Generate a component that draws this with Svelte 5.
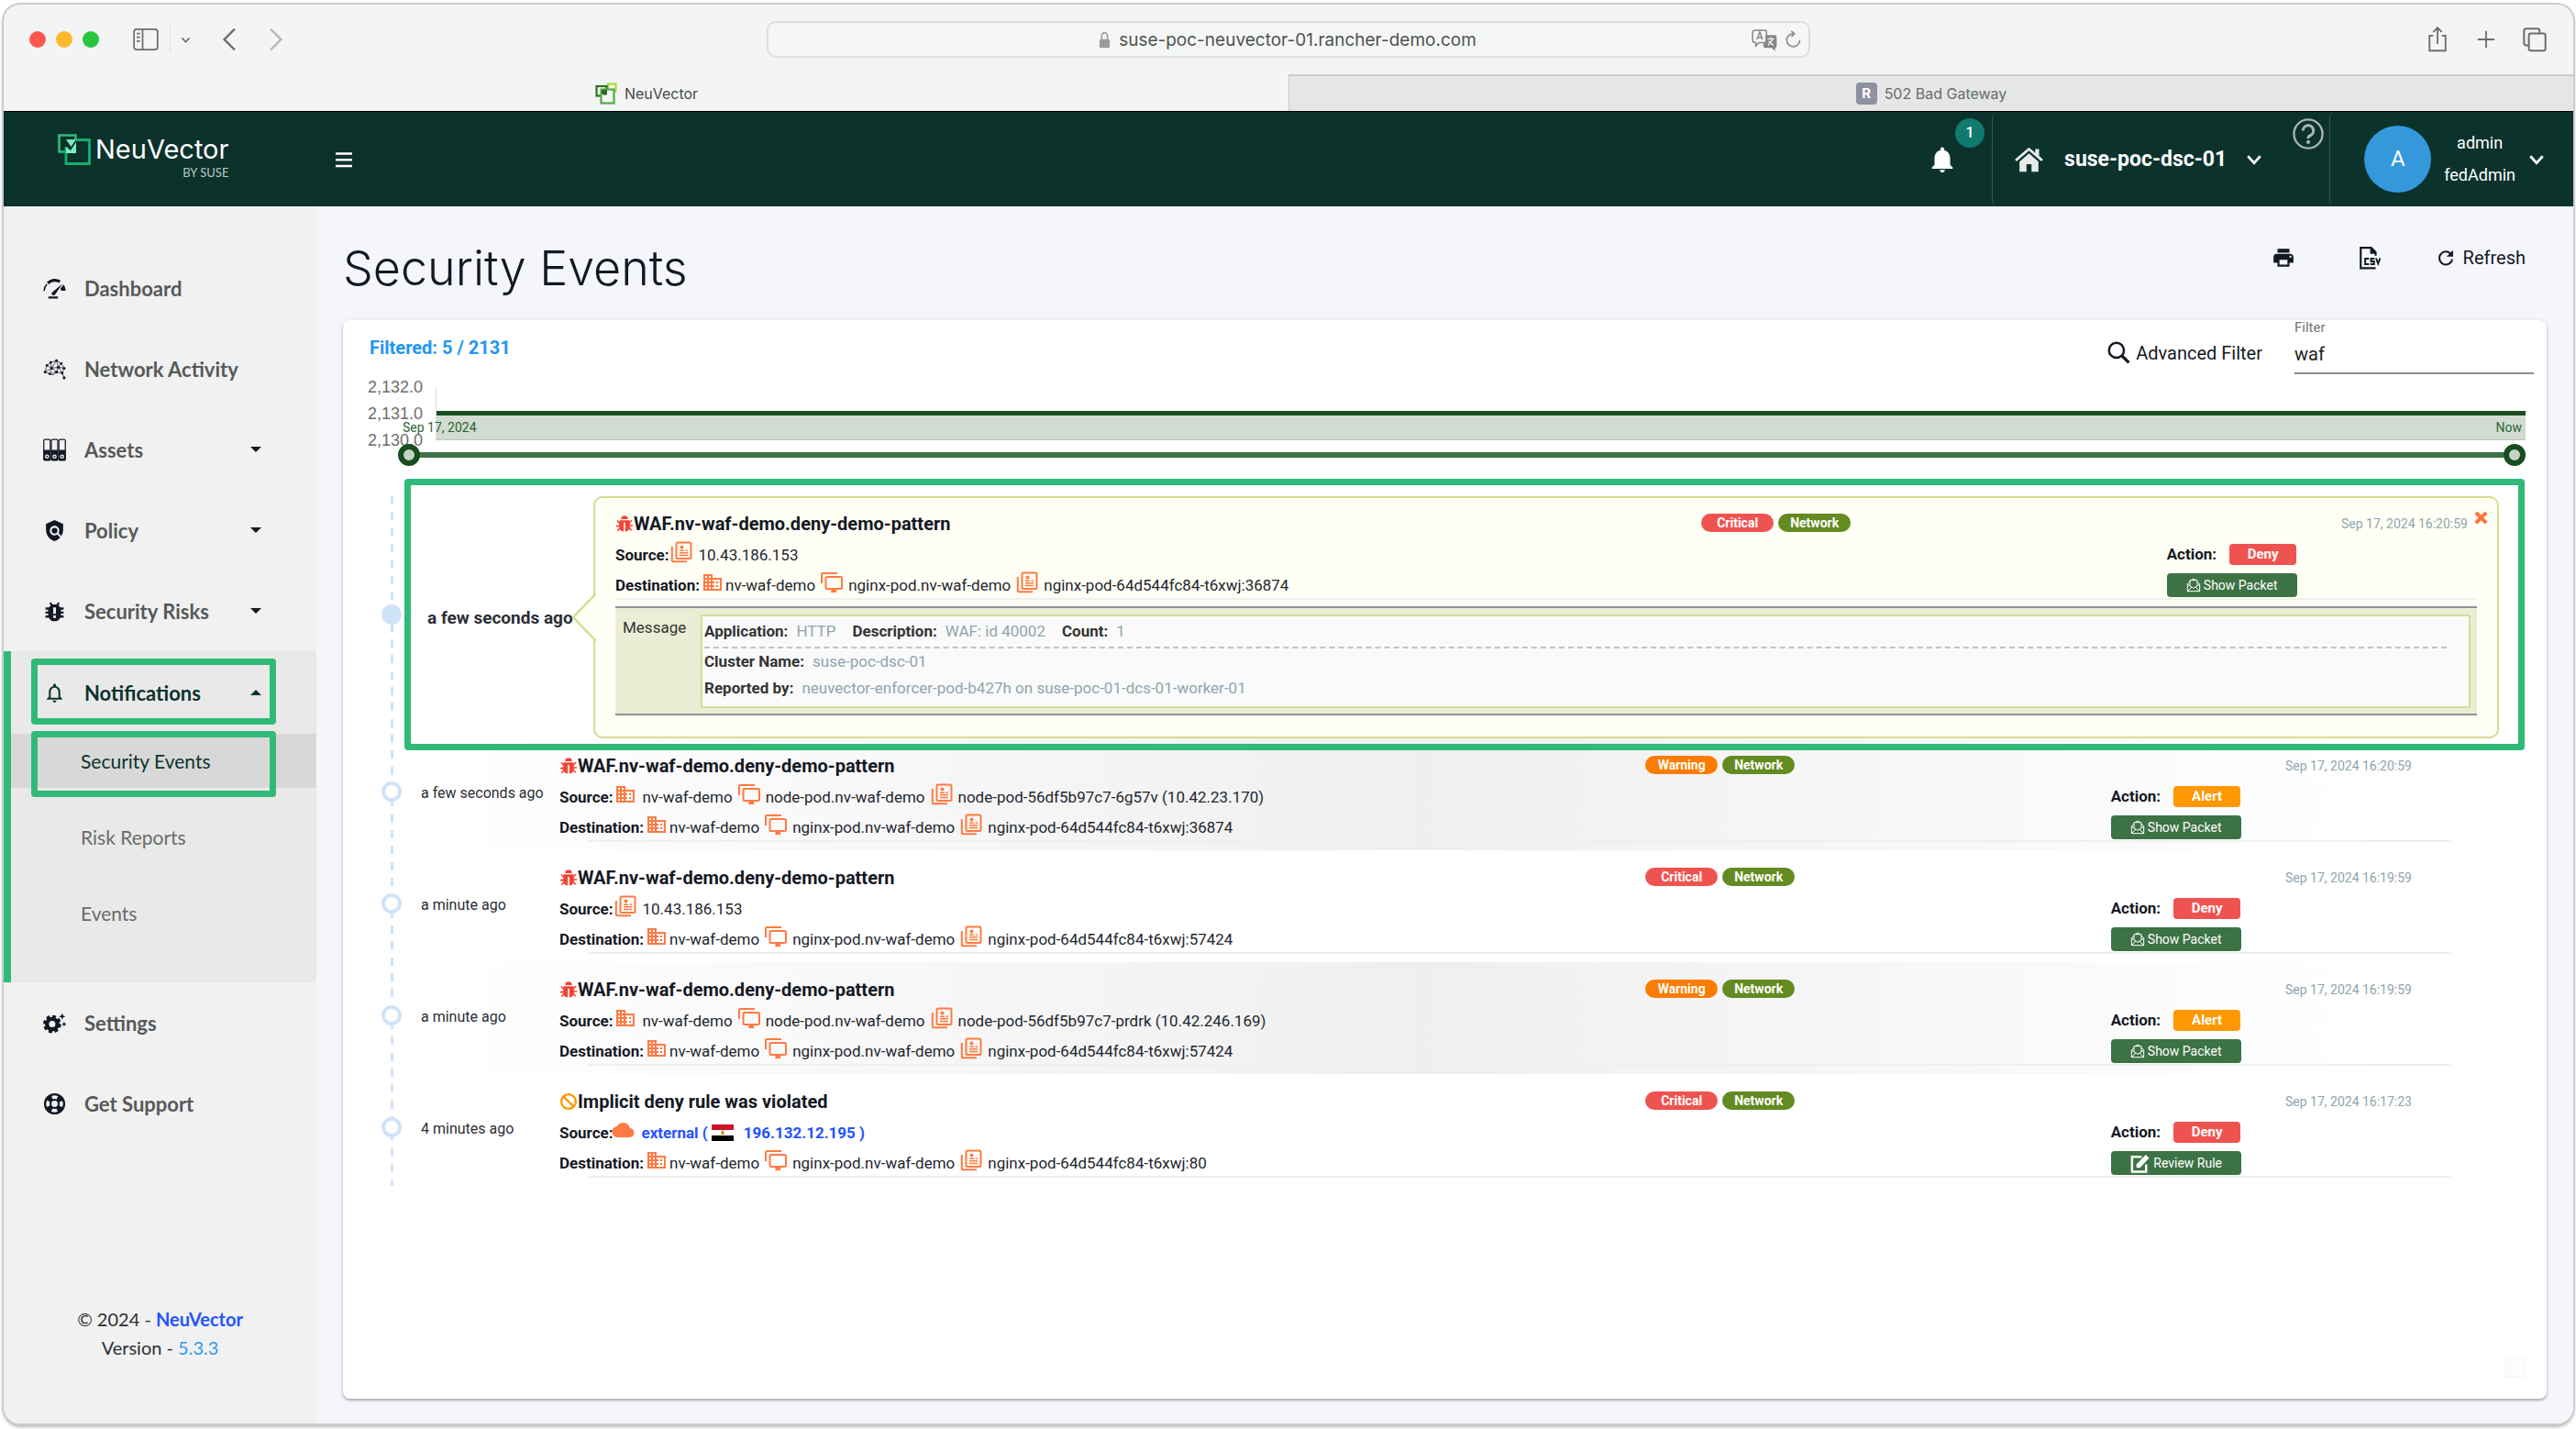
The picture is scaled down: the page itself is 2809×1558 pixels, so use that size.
<script>
  let filter = $state('waf');
  let from = $state(0);
  let to = $state(100);

  const menu = [
    { label: 'Dashboard', icon: 'gauge' },
    { label: 'Network Activity', icon: 'network' },
    { label: 'Assets', icon: 'binders', caret: true },
    { label: 'Policy', icon: 'policy', caret: true },
    { label: 'Security Risks', icon: 'risk', caret: true },
    {
      label: 'Notifications',
      icon: 'bellOutline',
      caret: true,
      open: true,
      children: ['Security Events', 'Risk Reports', 'Events']
    },
    { label: 'Settings', icon: 'gear' },
    { label: 'Get Support', icon: 'support' }
  ];

  const part = (icon, text, tight = false) => ({ icon, text, tight });
  const nginx = (port) => [
    part('building', 'nv-waf-demo', true),
    part('monitor', 'nginx-pod.nv-waf-demo'),
    part('pod', `nginx-pod-64d544fc84-t6xwj:${port}`)
  ];
  const node = (pod) => [
    part('building', 'nv-waf-demo'),
    part('monitor', 'node-pod.nv-waf-demo'),
    part('pod', pod)
  ];
  const waf = 'WAF.nv-waf-demo.deny-demo-pattern';

  const events = [
    {
      ago: 'a few seconds ago', title: waf, icon: 'bug', level: 'Critical', date: 'Sep 17, 2024 16:20:59',
      action: 'Deny', source: [part('pod', '10.43.186.153')], dest: nginx(36874), open: true
    },
    {
      ago: 'a few seconds ago', title: waf, icon: 'bug', level: 'Warning', date: 'Sep 17, 2024 16:20:59',
      action: 'Alert', source: node('node-pod-56df5b97c7-6g57v (10.42.23.170)'), dest: nginx(36874)
    },
    {
      ago: 'a minute ago', title: waf, icon: 'bug', level: 'Critical', date: 'Sep 17, 2024 16:19:59',
      action: 'Deny', source: [part('pod', '10.43.186.153')], dest: nginx(57424)
    },
    {
      ago: 'a minute ago', title: waf, icon: 'bug', level: 'Warning', date: 'Sep 17, 2024 16:19:59',
      action: 'Alert', source: node('node-pod-56df5b97c7-prdrk (10.42.246.169)'), dest: nginx(57424)
    },
    {
      ago: '4 minutes ago', title: 'Implicit deny rule was violated', icon: 'ban', level: 'Critical',
      date: 'Sep 17, 2024 16:17:23', action: 'Deny', external: '196.132.12.195', dest: nginx(80), rule: true
    }
  ];
</script>

{#snippet icon(name)}
  <svg class="icon {name}" viewBox="0 0 24 24" aria-hidden="true">
    {#if name === 'gauge'}
      <path d="M1 14.500A11 11 0 0 1 4 7.500" fill="none" stroke="currentColor" stroke-width="1.500" />
      <path d="M5 6.500A10 10 0 0 1 17.500 5" fill="none" stroke="currentColor" stroke-width="3.200" />
      <path d="M20.500 7 10 15.500a2 2 0 1 0 2.800 2.400zM21.500 7.800A11 11 0 0 1 23.500 14.500H18.800L18.300 12zM5.500 20.500h10v2h-10z" />
    {:else if name === 'network'}
      <g fill="none" stroke="currentColor" stroke-width=".7">
        <path d="M2 15 4 8 8 5l6-2 5 3 3 5-2 5 2 5M4 8l5 3 5-8 2 7 6 1M8 5l1 6-7 4 5 2 2-6 5 4 2-5-7 1M7 17l7-2 6 1-4-6 3-4M14 15l-3 3-4-1" />
      </g>
      <circle cx="2" cy="15" r="1.400" /><circle cx="4" cy="8" r="1.300" /><circle cx="8" cy="5" r="1.300" />
      <circle cx="14" cy="3" r="1.400" /><circle cx="19" cy="6" r="1.300" /><circle cx="22" cy="11" r="1.500" />
      <circle cx="20" cy="16" r="1.400" /><circle cx="22" cy="21" r="1.500" /><circle cx="9" cy="11" r="1.500" />
      <circle cx="16" cy="10" r="1.600" /><circle cx="7" cy="17" r="1.300" /><circle cx="14" cy="15" r="1.500" />
    {:else if name === 'binders'}
      {#each [0.7, 8.6, 16.500] as x}
        <rect {x} y="1" width="6.800" height="22" rx="1.500" fill="none" stroke="currentColor" stroke-width="1.200" />
        <rect {x} y="12" width="6.800" height="11" rx="1" />
        <circle cx={x + 3.4} cy="19" r="2.200" fill="#f1f1f1" /><circle cx={x + 3.4} cy="19" r=".9" />
      {/each}
    {:else if name === 'policy'}
      <path d="M21 5l-9-4-9 4v6c0 5.550 3.840 10.740 9 12 2.300-.56 4.330-1.900 5.880-3.710l-3.120-3.120c-1.940 1.290-4.580 1.070-6.290-.64-1.950-1.950-1.950-5.120 0-7.070 1.950-1.950 5.120-1.950 7.070 0 1.710 1.710 1.920 4.350.64 6.290l2.900 2.900C20.290 15.690 21 13.380 21 11V5z" />
      <circle cx="12" cy="12" r="3" />
    {:else if name === 'risk'}
      <path d="M8 2.500l2 2.200h4l2-2.200 1.500 1.400-1.600 1.800q1.300.8 2 2.300H21.500v2.200h-2.800v2H21.500v2.200h-2.800v2H21.500v2.200h-3.600A6.500 6.500 0 0 1 6.100 18.600H2.500v-2.200h2.800v-2H2.500v-2.200h2.800v-2H2.500V8h3.600q.7-1.500 2-2.300L6.500 3.900zM10.600 8v6.600h2.800V8zm0 8.400v2.600h2.800v-2.600z" fill-rule="evenodd" />
    {:else if name === 'bellOutline'}
      <path d="M12 22c1.100 0 2-.9 2-2h-4c0 1.100.9 2 2 2zm6-6v-5c0-3.070-1.630-5.640-4.500-6.320V4c0-.83-.67-1.500-1.500-1.500s-1.500.67-1.500 1.500v.68C7.640 5.360 6 7.920 6 11v5l-2 2v1h16v-1l-2-2zm-2 1H8v-6c0-2.480 1.510-4.500 4-4.500s4 2.020 4 4.500v6z" />
    {:else if name === 'bell'}
      <path d="M12 22c1.100 0 2-.9 2-2h-4c0 1.100.89 2 2 2zm6-6v-5c0-3.070-1.640-5.640-4.500-6.320V4c0-.83-.67-1.500-1.500-1.500s-1.500.67-1.500 1.500v.68C7.630 5.360 6 7.920 6 11v5l-2 2v1h16v-1l-2-2z" />
    {:else if name === 'gear'}
      <circle cx="9.500" cy="13" r="5.500" fill="none" stroke="currentColor" stroke-width="4.200" />
      <circle cx="9.500" cy="13" r="8" fill="none" stroke="currentColor" stroke-width="3" stroke-dasharray="3.600 2.683" />
      <path d="M20 1.500l1 2.500 2.500 1-2.500 1-1 2.500L19 6l-2.500-1L19 4zM22 10.500l.8 1.700 1.700.8-1.700.8-.8 1.700-.8-1.700-1.700-.8 1.700-.8z" />
    {:else if name === 'support'}
      <circle cx="12" cy="12" r="10" fill="none" stroke="currentColor" stroke-width="2.200" />
      <circle cx="12" cy="12" r="4.300" fill="none" stroke="currentColor" stroke-width="2" />
      <circle cx="12" cy="12" r="7.200" fill="none" stroke="currentColor" stroke-width="5.500" stroke-dasharray="5.600 5.710" stroke-dashoffset="-2.850" />
    {:else if name === 'building'}
      <path d="M12 7V3H2v18h20V7H12zM6 19H4v-2h2v2zm0-4H4v-2h2v2zm0-4H4V9h2v2zm0-4H4V5h2v2zm4 12H8v-2h2v2zm0-4H8v-2h2v2zm0-4H8V9h2v2zm0-4H8V5h2v2zm10 12h-8v-2h2v-2h-2v-2h2v-2h-2V9h8v10zm-2-8h-2v2h2v-2zm0 4h-2v2h2v-2z" />
    {:else if name === 'pod'}
      <rect x="6.500" y="1.500" width="16" height="17.500" rx="1.500" fill="none" stroke="currentColor" stroke-width="2" />
      <path d="M1.800 6v15.200q0 1 1 1H18" fill="none" stroke="currentColor" stroke-width="2" />
      <circle cx="12.500" cy="6.500" r="2" /><path d="M10 9.500h5v1.500h-5zM10 12h9v1.500h-9zM10 14.800h9v1.500h-9zM16.500 9.500h2.500v1.500h-2.500z" />
    {:else if name === 'monitor'}
      <rect x="5.500" y="6" width="17.500" height="13" rx="1.500" fill="none" stroke="currentColor" stroke-width="2" />
      <path d="M1 13V3.200q0-1.200 1.200-1.200H18" fill="none" stroke="currentColor" stroke-width="2" />
      <path d="M12 19h4.500l1 4h-6.500z" />
    {:else if name === 'bug'}
      <path d="M7.500 6a4.500 4.500 0 0 1 9 0zM5.500 7.500h13v1.800l2.500-2.800 1.400 1.300-3.400 3.600v2H23v2h-4v1.300l3 3.300-1.500 1.300-2.300-2.500Q16.800 22 13 22.300V10.500h-2v11.800Q7.200 22 5.800 19.500l-2.300 2.500L2 20.700l3-3.300v-1.300H1v-2h4v-2L1.600 8.500 3 7.200l2.500 2.500z" />
    {:else if name === 'ban'}
      <circle cx="12" cy="12" r="9.500" fill="none" stroke="currentColor" stroke-width="2.800" />
      <path d="M5.500 5.500l13 13" stroke="currentColor" stroke-width="2.800" />
    {:else if name === 'cloud'}
      <path d="M19.350 10.040C18.670 6.590 15.640 4 12 4 9.110 4 6.600 5.640 5.350 8.040 2.340 8.360 0 10.910 0 14c0 3.310 2.690 6 6 6h13c2.760 0 5-2.240 5-5 0-2.640-2.050-4.780-4.650-4.960z" />
    {:else if name === 'flag'}
      <path d="M0 3h24v6H0z" fill="#ce1126" /><path d="M0 9h24v6H0z" fill="#fff" /><path d="M0 15h24v6H0z" fill="#000" />
      <path d="M11 9.500h2l.8 4.500h-3.600z" fill="#c09300" />
    {:else if name === 'print'}
      <path d="M19 8H5c-1.660 0-3 1.340-3 3v6h4v4h12v-4h4v-6c0-1.660-1.340-3-3-3zm-3 11H8v-5h8v5zm3-7c-.55 0-1-.45-1-1s.45-1 1-1 1 .45 1 1-.45 1-1 1zm-1-9H6v4h12V3z" />
    {:else if name === 'csv'}
      <path d="M18 10V6.500L13.500 2H3v20.500h15" fill="none" stroke="currentColor" stroke-width="2" />
      <path d="M12.500 2v6H19z" />
      <g fill="none" stroke="currentColor" stroke-width="1.800">
        <path d="M11.300 13H7.500v5.500h3.800M17 13h-3.600v2.700h3V18.500h-3.800M18.500 12.500l2 5.500 2-5.500" />
      </g>
    {:else if name === 'refresh'}
      <path d="M19 7.500A8.500 8.500 0 1 0 20.500 14" fill="none" stroke="currentColor" stroke-width="2.400" />
      <path d="M21.500 2v8.500H13z" />
    {:else if name === 'search'}
      <circle cx="9.500" cy="9.500" r="7.800" fill="none" stroke="currentColor" stroke-width="2.400" />
      <path d="M15 15l7.500 7.500" stroke="currentColor" stroke-width="3.200" />
    {:else if name === 'mail'}
      <g fill="none" stroke="currentColor" stroke-width="1.500">
        <path d="M2 10v12h20V10l-4-3.500M2 10l4-3.500M2 22l7-7M22 22l-7-7M2.500 11 12 17l9.500-6M6 13V4h12v9M8 4l4-2.500L16 4" />
      </g>
    {:else if name === 'edit'}
      <path d="M19 13v8.500H3v-17h11" fill="none" stroke="currentColor" stroke-width="2.600" />
      <path d="M8 13 18.500 2l4 3.800L12 17H8z" />
    {:else if name === 'home'}
      <path d="M12 7.500 4.500 14v8H10v-6h4v6h5.500v-8z" /><path d="M1.500 13 12 4l10.500 9" fill="none" stroke="currentColor" stroke-width="2" />
      <path d="M17 4h3v6l-3-2.500z" />
    {:else if name === 'chevron'}
      <path d="M3 7l9 10 9-10" fill="none" stroke="currentColor" stroke-width="3.600" />
    {:else if name === 'cross'}
      <path d="M3 3l18 18M21 3 3 21" stroke="currentColor" stroke-width="6.500" />
    {:else if name === 'menu'}
      <path d="M0 1.500h24v3.500H0zM0 10.500h24V14H0zM0 19.500h24V23H0z" />
    {:else if name === 'panel'}
      <g fill="none" stroke="currentColor" stroke-width="1.500">
        <rect x="1" y="2.500" width="22" height="19" rx="2.500" /><path d="M9 2.500v19M3.500 6.500H6.500M3.500 10H6.500M3.500 13.500H6.500" />
      </g>
    {:else if name === 'back'}
      <path d="M17.500 1.500 7 12l10.500 10.500" fill="none" stroke="currentColor" stroke-width="2.200" />
    {:else if name === 'forward'}
      <path d="M6.500 1.500 17 12 6.500 22.500" fill="none" stroke="currentColor" stroke-width="2.200" />
    {:else if name === 'lock'}
      <rect x="5" y="11" width="14" height="12" rx="2" /><path d="M8 12V6.500a4 4.500 0 0 1 8 0V12" fill="none" stroke="currentColor" stroke-width="2" />
    {:else if name === 'translate'}
      <path d="M3 3.500h9a2 2 0 0 1 2 2V13q0 2-2 2H7l-3 3v-3q-3 0-3-2V5.500a2 2 0 0 1 2-2zM5 12l2.700-7 2.500 7M6 10h3.500" fill="none" stroke="currentColor" stroke-width="1.300" />
      <path d="M13 8h8.500A2 2 0 0 1 23.500 10v8a2 2 0 0 1-1.500 2v3l-3-3h-6a2 2 0 0 1-2-2v-2l2-1z" />
      <path d="M15 11.500h6M18 10v1.500M20 11.500l-4.500 6M16 13.500l4.500 4" fill="none" stroke="#f3f5f4" stroke-width="1.200" />
    {:else if name === 'reload'}
      <path d="M13 4.500a8.500 8.500 0 1 0 8 8.500M10 1l4 3.500-4 4" fill="none" stroke="currentColor" stroke-width="2" />
    {:else if name === 'share'}
      <path d="M8 8.500H4.500V22.500h15V8.500H16M12 16V1.500M8 5l4-3.800L16 5" fill="none" stroke="currentColor" stroke-width="1.600" />
    {:else if name === 'plus'}
      <path d="M12 2v20M2 12h20" stroke="currentColor" stroke-width="2" />
    {:else if name === 'copy'}
      <path d="M6.500 17.500H4a2 2 0 0 1-2-2V4a2 2 0 0 1 2-2h10.500a2 2 0 0 1 2 2v2.500" fill="none" stroke="currentColor" stroke-width="1.700" />
      <rect x="6.500" y="6.500" width="15.500" height="16" rx="2" fill="none" stroke="currentColor" stroke-width="1.700" />
    {:else if name === 'help'}
      <circle cx="12" cy="12" r="11" fill="none" stroke="currentColor" stroke-width="1.700" />
      <path d="M8 9.500a4 4 0 1 1 5.500 3.700q-1.500.7-1.500 2.300" fill="none" stroke="currentColor" stroke-width="2.200" /><circle cx="12" cy="18.300" r="1.500" />
    {/if}
  </svg>
{/snippet}

{#snippet endpoint(label, parts)}
  <div class="endpoint">
    <strong>{label}:</strong>
    {#each parts as p}
      <span class="part" class:tight={p.tight}>{@render icon(p.icon)}{p.text}</span>
    {/each}
  </div>
{/snippet}

{#snippet summary(e)}
  <div class="summary">
    <h2>{@render icon(e.icon)}{e.title}</h2>
    <div class="badges">
      <span class="badge {e.level.toLowerCase()}">{e.level}</span>
      <span class="badge network">Network</span>
    </div>
    <time>{e.date}</time>
    {#if e.external}
      <div class="endpoint">
        <strong>Source:</strong>
        <a class="part external" href="#external">{@render icon('cloud')}external ({@render icon('flag')}{e.external} )</a>
      </div>
    {:else}
      {@render endpoint('Source', e.source)}
    {/if}
    <div class="action">Action: <span class="verdict {e.action.toLowerCase()}">{e.action}</span></div>
    {@render endpoint('Destination', e.dest)}
    <button class="packet">
      {#if e.rule}{@render icon('edit')}Review Rule{:else}{@render icon('mail')}Show Packet{/if}
    </button>
  </div>
{/snippet}

<div class="window">
  <div class="toolbar">
    <div class="tools">
      <span class="light red"></span><span class="light amber"></span><span class="light green"></span>
      <button class="tool panelbtn" aria-label="Sidebar">{@render icon('panel')}</button>
      <button class="tool tiny" aria-label="Tab groups">{@render icon('chevron')}</button>
      <button class="tool" aria-label="Back">{@render icon('back')}</button>
      <button class="tool faded" aria-label="Forward">{@render icon('forward')}</button>
    </div>
    <div class="address">
      <span class="host">{@render icon('lock')}suse-poc-neuvector-01.rancher-demo.com</span>
      <button class="tool wide" aria-label="Translate">{@render icon('translate')}</button>
      <button class="tool small" aria-label="Reload">{@render icon('reload')}</button>
    </div>
    <div class="tools end">
      <button class="tool" aria-label="Share">{@render icon('share')}</button>
      <button class="tool small" aria-label="New tab">{@render icon('plus')}</button>
      <button class="tool" aria-label="Tab overview">{@render icon('copy')}</button>
    </div>
  </div>

  <div class="tabs">
    <button class="tab current">
      <svg class="favicon" viewBox="0 0 24 24" aria-hidden="true">
        <g fill="none" stroke-width="2.200">
          <rect x="14" y="1.500" width="8.500" height="8" stroke="#a6dd3c" /><rect x="1.500" y="4" width="11" height="10.500" stroke="#2c6e1f" />
          <rect x="6.500" y="7.500" width="14" height="15" fill="#f3f5f4" stroke="#55a845" />
        </g>
        <path d="M7 8h6v5l-3 1-3-2z" fill="#2c6e1f" />
      </svg>NeuVector
    </button>
    <button class="tab"><span class="letter">R</span>502 Bad Gateway</button>
  </div>

  <header>
    <div class="brand">
      <svg class="logo" viewBox="0 0 36 34" aria-hidden="true">
        <path d="M8 19.500H1.500v-18h18V6" fill="none" stroke="#30ba78" stroke-width="2.600" />
        <path d="M9 14v18.500h25.500V6.500H20" fill="none" stroke="#12b06c" stroke-width="2.800" />
        <path d="M9 6h11l-5.500 8zM9 14l5 4 6-9v12H9z" fill="#74efc4" />
      </svg>
      <div class="wordmark">NeuVector<small>BY SUSE</small></div>
    </div>
    <button class="burger" aria-label="Toggle menu">{@render icon('menu')}</button>
    <button class="alerts" aria-label="Notifications">{@render icon('bell')}<span class="count">1</span></button>
    <button class="cluster">{@render icon('home')}<span>suse-poc-dsc-01</span>{@render icon('chevron')}</button>
    <button class="helpbtn" aria-label="Help">{@render icon('help')}</button>
    <button class="user">
      <span class="avatar">A</span>
      <span class="names"><span>admin</span><span>fedAdmin</span></span>
      {@render icon('chevron')}
    </button>
  </header>

  <div class="body">
    <aside>
      <nav>
        {#each menu as m}
          <div class="group" class:open={m.open}>
            <a class="item" class:marked={m.open} href="#menu">
              {@render icon(m.icon)}<span>{m.label}</span>
              {#if m.caret}<i class="caret"></i>{/if}
            </a>
            {#if m.children}
              <div class="children">
                {#each m.children as c, i}
                  <a href="#sub" class:active={i === 0} class:marked={i === 0}>{c}</a>
                {/each}
              </div>
            {/if}
          </div>
        {/each}
      </nav>
      <footer>
        <p>© 2024 - <a class="vendor" href="#vendor">NeuVector</a></p>
        <p>Version - <a href="#version">5.3.3</a></p>
      </footer>
    </aside>

    <main>
      <div class="heading">
        <h1>Security Events</h1>
        <button aria-label="Print">{@render icon('print')}</button>
        <button aria-label="Export CSV">{@render icon('csv')}</button>
        <button class="refreshbtn">{@render icon('refresh')}Refresh</button>
      </div>

      <section class="card">
        <div class="filters">
          <strong class="filtered">Filtered: 5 / 2131</strong>
          <button class="advanced">{@render icon('search')}Advanced Filter</button>
          <label class="filter">Filter<input type="text" bind:value={filter} /></label>
        </div>

        <div class="chart">
          <div class="scale"><span>2,132.0</span><span>2,131.0</span><span>2,130.0</span></div>
          <div class="plot">
            <div class="area"></div>
            <span class="start">Sep 17, 2024</span><span class="now">Now</span>
          </div>
        </div>
        <div class="slider">
          <input type="range" aria-label="From" bind:value={from} />
          <input type="range" aria-label="To" bind:value={to} class="upper" />
        </div>

        <ul class="timeline">
          {#each events as e, i}
            <li class:open={e.open} class:shaded={i % 2 === 1}>
              <span class="node"></span>
              <span class="ago">{e.ago}</span>
              {#if e.open}
                <article class="bubble">
                  <svg class="pointer" viewBox="0 0 27 54" aria-hidden="true">
                    <path d="M27 1 2 27l25 26" fill="#fffff5" stroke="#d5dc92" stroke-width="2.500" />
                  </svg>
                  <button class="close" aria-label="Close">{@render icon('cross')}</button>
                  {@render summary(e)}
                  <table>
                    <tbody>
                      <tr>
                        <th scope="row">Message</th>
                        <td>
                          <div class="message">
                            <p class="dashed">
                              <b>Application:</b><span>HTTP</span><b>Description:</b><span>WAF: id 40002</span><b>Count:</b><span>1</span>
                            </p>
                            <p><b>Cluster Name:</b><span>suse-poc-dsc-01</span></p>
                            <p><b>Reported by:</b><span>neuvector-enforcer-pod-b427h on suse-poc-01-dcs-01-worker-01</span></p>
                          </div>
                        </td>
                      </tr>
                    </tbody>
                  </table>
                </article>
              {:else}
                {@render summary(e)}
              {/if}
            </li>
          {/each}
        </ul>
        <span class="grip"></span>
      </section>
    </main>
  </div>
</div>

<style>
  :global(body) { margin: 0; background: #fff; }
  *, *::before, *::after { box-sizing: border-box; }
  p, h1, h2, ul { margin: 0; padding: 0; }
  button, input { font: inherit; color: inherit; background: none; border: 0; padding: 0; margin: 0; }
  button { display: inline-flex; align-items: center; }
  a { color: inherit; text-decoration: none; }
  .icon { width: 22px; height: 22px; fill: currentColor; flex: none; display: block; }

  .window {
    margin: 5px 3px 6px 4px;
    min-height: calc(100vh - 11px);
    display: flex;
    flex-direction: column;
    border-radius: 18px;
    overflow: hidden;
    font-family: Roboto, "Liberation Sans", sans-serif;
    color: #141824;
    background: #f3f5f4;
    box-shadow: 0 0 0 2px #cbcccc, 0 3px 4px #999;
  }

  .toolbar { display: grid; grid-template-columns: 1fr minmax(0, 1138px) 1fr; align-items: center; height: 76px; padding: 0 28px; color: #6b6d6d; }
  .tools { display: flex; align-items: center; gap: 11px; }
  .tools.end { justify-content: flex-end; gap: 28px; }
  .tools.end .icon { width: 28px; height: 28px; }
  .tools.end .small .icon { width: 22px; height: 22px; }
  .light { width: 18px; height: 18px; border-radius: 50%; }
  .red { background: #fe5650; }
  .amber { background: #fdb82d; }
  .green { background: #27c63e; }
  .panelbtn { margin-left: 26px; padding-right: 12px; border-right: 1px solid #dfe1e0; }
  .panelbtn .icon { width: 28px; height: 28px; }
  .tiny { margin-right: 18px; }
  .tiny .icon { width: 11px; height: 11px; }
  .tool + .tool.faded { margin-left: 14px; }
  .faded { color: #b4b6b6; }
  .tools .back, .tools .forward { width: 26px; height: 26px; }
  .address { display: flex; align-items: center; height: 40px; border: 2px solid #dddfde; border-radius: 10px; padding: 0 7px; font-family: Inter, sans-serif; font-size: 19px; color: #4f5151; background: #f5f7f6; }
  .host { flex: 1; display: flex; align-items: center; justify-content: center; gap: 6px; padding-left: 50px; }
  .host .icon { width: 19px; height: 19px; color: #9a9c9c; }
  .wide { margin-right: 7px; }
  .wide .icon { width: 28px; height: 28px; color: #858787; }
  .address .small .icon { width: 20px; height: 20px; color: #8b8d8d; }

  .tabs { display: grid; grid-template-columns: 1fr 1fr; height: 40px; font-family: Inter, sans-serif; font-size: 16px; color: #6a6c6c; }
  .tab { justify-content: center; gap: 8px; background: #e5e7e6; border-top: 2px solid #c9cbca; border-left: 1px solid #c9cbca; }
  .tab.current { background: none; border-color: transparent; color: #474949; }
  .favicon { width: 24px; height: 24px; }
  .letter { width: 23px; height: 24px; line-height: 24px; border-radius: 4px; background: #8f90a0; color: #fff; font-size: 15px; font-weight: 700; text-align: center; }

  header { display: flex; height: 104px; background: #0c322c; border-top: 1px solid #000; color: #fff; }
  .brand { width: 341px; padding: 24px 0 0 59px; display: flex; gap: 5px; align-items: flex-start; }
  .logo { width: 36px; height: 34px; }
  .wordmark { display: flex; flex-direction: column; font-family: Inter, sans-serif; font-size: 29px; line-height: 34px; }
  .wordmark small { font: 13px/16px Lato, sans-serif; text-align: right; color: #b9c8c4; }
  .burger { margin: 0 auto 0 21px; }
  .burger .icon { width: 18px; height: 18px; }
  .alerts { position: relative; width: 84px; padding-left: 13px; }
  .alerts .icon { width: 34px; height: 34px; }
  .count { position: absolute; top: 7px; right: 8px; width: 32px; height: 32px; line-height: 32px; border-radius: 50%; background: #117a70; font-size: 16px; font-weight: 500; }
  .cluster { padding: 0 33px 0 23px; border-left: 1px solid #34524d; border-radius: 6px 0 0 6px; font-size: 23px; font-weight: 700; }
  .cluster span { margin: 0 21px 0 22px; }
  .cluster .home { width: 33px; height: 33px; color: #e6ecea; }
  header .chevron { width: 18px; height: 18px; }
  .helpbtn { align-items: flex-start; padding: 7px 6px 0 0; color: #a7b4b1; }
  .helpbtn .icon { width: 34px; height: 34px; }
  .user { padding: 0 31px 0 37px; border-left: 1px solid #34524d; border-radius: 6px 0 0 6px; font-size: 18px; }
  .avatar { width: 73px; height: 73px; line-height: 73px; border-radius: 50%; background: #3498db; font-size: 24px; }
  .names { display: flex; flex-direction: column; gap: 13px; line-height: 22px; padding: 0 14px; }

  .body { flex: 1; display: flex; }
  aside { width: 341px; flex: none; background: #f1f1f1; padding-top: 45px; display: flex; flex-direction: column; justify-content: space-between; font-family: Lato, sans-serif; }
  .item { position: relative; display: flex; align-items: center; height: 88px; padding-left: 43px; font-size: 22px; font-weight: 700; color: #57595a; }
  .item .icon { width: 25px; height: 25px; margin-right: 20px; color: #141824; }
  .item .bellOutline { color: #0c322c; }
  .caret { margin-left: auto; margin-right: 60px; border: 6px solid transparent; border-top-color: #141824; border-bottom: 0; }
  .group.open { background: #e9e9e9; box-shadow: inset 8px 0 #30ba78; padding-bottom: 46px; }
  .group.open .item { height: 90px; color: #0c322c; }
  .group.open .caret { border: 6px solid transparent; border-bottom-color: #0c322c; border-top: 0; }
  .children { display: grid; gap: 24px; padding-left: 8px; font-size: 21px; color: #6a6c6c; }
  .children a { position: relative; height: 59px; line-height: 59px; padding-left: 76px; }
  .children .active { background: #d8d8d8; color: #0c322c; }
  .marked::before { content: ""; position: absolute; left: 30px; top: 8px; width: 267px; height: 72px; border: 7px solid #30ba78; border-radius: 4px; }
  .children .marked::before { left: 22px; top: -3px; }
  footer { padding: 0 0 67px; text-align: center; font-size: 20px; line-height: 31px; color: #2c2f36; }
  footer a { color: #2f9bef; }
  footer .vendor { color: #2453ff; font-weight: 700; }

  main { flex: 1; min-width: 0; display: flex; flex-direction: column; padding: 0 29px 27px; background: #f5f6fb; }
  .heading { display: flex; height: 124px; align-items: center; font-size: 20px; }
  .heading h1 { margin-right: auto; padding-top: 12px; font: 300 52px/64px Inter, sans-serif; }
  .heading button { margin: 0 0 12px 68px; }
  .heading .icon { width: 26px; height: 26px; }
  .heading .refreshbtn { margin-left: 60px; margin-right: 23px; gap: 9px; }
  .heading .refresh { width: 20px; height: 20px; }

  .card { flex: 1; position: relative; background: #fff; border-radius: 8px; box-shadow: 0 2px 3px #a9abb0, 0 0 4px #e3e5ea; }
  .filters { display: flex; align-items: flex-start; height: 64px; padding: 0 14px 0 29px; font-size: 20px; line-height: 24px; }
  .filtered { margin-right: auto; padding-top: 18px; font-weight: 700; color: #2196f3; }
  .advanced { gap: 6px; margin: 23px 35px 0 0; line-height: 24px; }
  .advanced .icon { width: 25px; height: 25px; }
  .filter { display: flex; flex-direction: column; width: 261px; font-size: 15px; line-height: 16px; color: #757575; }
  .filter input { height: 43px; padding: 0; border-bottom: 2px solid #8c8c8c; font-size: 20px; color: #212121; outline: 0; }

  .chart { display: flex; padding: 0 23px 0 27px; }
  .scale { display: flex; flex-direction: column; justify-content: space-between; width: 74px; height: 76px; font: 18px/18px "Liberation Sans", sans-serif; color: #6e6e6e; }
  .plot { position: relative; flex: 1; margin: 9px 0; border-left: 1px solid #dcdcdc; display: flex; align-items: flex-end; }
  .area { flex: 1; height: 32px; background: #d1dbd1; border-top: 5px solid #184d1f; border-bottom: 1px solid #bcc6bc; }
  .plot span { position: absolute; top: 35px; font-size: 14px; line-height: 18px; color: #2c6636; }
  .start { left: -37px; }
  .now { right: 4px; }
  .slider { display: grid; margin: -5px 23px 0 60px; }
  .slider input { grid-area: 1 / 1; appearance: none; height: 24px; background: linear-gradient(#3d7245, #3d7245) center / 98% 6px no-repeat; }
  .slider .upper { background: none; pointer-events: none; }
  .slider input::-webkit-slider-thumb { appearance: none; box-sizing: border-box; width: 24px; height: 24px; border: 6px solid #184d1f; border-radius: 50%; background: #c5d4c6; pointer-events: auto; }

  .timeline {
    list-style: none;
    margin-top: 33px;
    background: repeating-linear-gradient(#cfe3f8 0 9px, transparent 9px 17px, #cfe3f8 17px 26px, transparent 26px 35px, #cfe3f8 35px 44px, transparent 44px 52px) 52px 0 / 3px 100% no-repeat;
  }
  li { position: relative; display: grid; grid-template-columns: 43px 151px 1fr; align-items: center; padding: 0 137px 0 42px; min-height: 122px; }
  li.shaded { background: linear-gradient(92deg, transparent 4%, #efefef 49%, transparent 92%); }
  li.open { grid-template-columns: 50px 181px 1fr; padding-right: 52px; }
  li.open::after { content: ""; position: absolute; inset: -19px 24px -13px 67px; border: 7px solid #30ba78; border-radius: 4px; pointer-events: none; z-index: 1; }
  .node { width: 22px; height: 22px; margin-bottom: 6px; border: 4px solid #cfe3f8; border-radius: 50%; background: #fff; }
  .open .node { background: #cfe3f8; }
  .ago { padding-bottom: 3px; font-size: 16px; color: #2b2e36; }
  .open .ago { padding: 0; font-size: 19px; font-weight: 700; }

  .summary { position: relative; display: grid; grid-template: 35px 34px 32px / 7fr 3fr 2fr; align-items: center; padding: 12px 0 9px; font-size: 17px; }
  .summary::after { content: ""; position: absolute; left: 32px; right: -32px; bottom: 9px; border-bottom: 2px solid #eeeff0; }
  h2 { display: flex; align-items: center; font-size: 20px; font-weight: 700; white-space: nowrap; }
  h2 .icon { width: 20px; height: 20px; }
  .bug { color: #f44336; }
  .ban { color: #ff9800; }
  .badges { display: flex; gap: 5px; }
  .badge { width: 79px; height: 20px; line-height: 20px; margin-bottom: 1px; border-radius: 10px; color: #fff; font-size: 14px; font-weight: 700; text-align: center; }
  .critical, .deny { background: #ef5350; }
  .warning { background: #fb7c00; }
  .network.badge { background: #648a22; }
  time { justify-self: end; margin-right: 10px; font-size: 14px; color: #90a4ae; }
  .endpoint { grid-column: 1 / 3; display: flex; gap: 6px; white-space: nowrap; line-height: 30px; color: #23262f; }
  .endpoint strong { font-weight: 700; color: #141824; margin-right: -4px; }
  .part { display: flex; gap: 7px; }
  .tight { gap: 3px; }
  .part .icon { color: #ff7a42; width: 24px; height: 24px; margin-right: -1px; }
  .external { color: #2453ff; font-weight: 700; }
  .part .cloud { width: 27px; margin-left: -4px; }
  .part .flag { margin: 3px 4px 0 -3px; }
  .action { position: relative; z-index: 1; font-weight: 700; display: flex; align-items: center; gap: 14px; margin-bottom: 2px; }
  .verdict { width: 73px; height: 23px; line-height: 23px; border-radius: 4px; color: #fff; font-size: 15px; font-weight: 700; text-align: center; }
  .alert { background: #ff9800; }
  .packet { position: relative; z-index: 1; justify-self: start; justify-content: center; gap: 3px; width: 142px; height: 26px; border-radius: 4px; background: #3d7245; color: #fff; font-size: 14px; }
  .packet .icon { width: 16px; height: 16px; }
  .packet .edit { width: 23px; height: 23px; }

  .bubble { position: relative; padding: 0 22px 23px; background: #fffff5; border: 2px solid #d5dc92; border-radius: 10px; }
  .bubble .summary { padding: 10px 0 7px; }
  .bubble .summary::after { left: 0; right: 0; bottom: 7px; }
  .pointer { position: absolute; left: -26px; top: calc(50% - 27px); width: 27px; height: 54px; }
  .close { position: absolute; right: 10px; top: 14px; color: #ff7240; }
  .close .icon { width: 15px; height: 15px; }
  table { width: 100%; border-collapse: separate; border-spacing: 0; background: #ebeed5; border-top: 2px solid #8d9196; border-bottom: 2px solid #8d9196; font-size: 17px; }
  th { width: 93px; padding: 11px 0 0 8px; font-weight: 400; text-align: left; vertical-align: top; line-height: 20px; color: #333; }
  td { padding: 7px 7px 6px 0; }
  .message { padding: 0 24px 5px 2px; border: 2px solid #d5dc92; background: #fafafa; line-height: 29px; }
  .message b { margin-right: 9px; font-weight: 700; color: #333; }
  .message span { margin-right: 18px; color: #90a4ae; }
  .message .dashed { padding: 2px 0; border-bottom: 2px dashed #c3c3c3; }
  .grip { position: absolute; right: 23px; bottom: 23px; width: 22px; height: 22px; border: 1px solid #f5f5f7; background: #fcfcfd; }
</style>
